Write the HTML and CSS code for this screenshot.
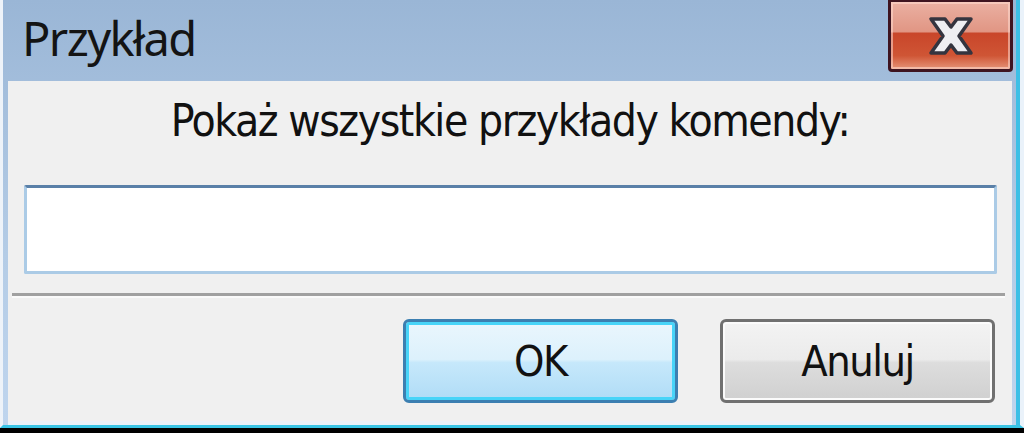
FILE: index.html
```html
<!DOCTYPE html>
<html lang="pl">
<head>
<meta charset="utf-8">
<title>Przykład</title>
<link rel="stylesheet" href="styles.css">
</head>
<body>
<div class="window">
  <div class="titlebar">
    <div class="title">Przykład</div>
    <button class="close" aria-label="Zamknij">
      <svg width="48" height="42" viewBox="0 0 48 42">
        <path d="M4 4 L18 4 L24 12 L30 4 L44 4 L32 21 L44 38 L30 38 L24 30 L18 38 L4 38 L16 21 Z" fill="#eeeef2" stroke="#34343f" stroke-width="3.5" stroke-linejoin="round"/>
      </svg>
    </button>
  </div>
  <div class="client">
    <div class="label">Pokaż wszystkie przykłady komendy:</div>
    <div class="input"></div>
    <div class="separator"></div>
    <div class="buttons">
      <button class="btn btn-default">OK</button>
      <button class="btn">Anuluj</button>
    </div>
  </div>
</div>
</body>
</html>
```

FILE: styles.css
```css
html, body {
  margin: 0;
  padding: 0;
  background: #000;
  width: 1024px;
  height: 433px;
  overflow: hidden;
}

.window {
  box-sizing: border-box;
  width: 1024px;
  height: 428px;
  display: flex;
  flex-direction: column;
  background: linear-gradient(to bottom, #9ab6d6 0%, #b4cce6 60%, #bfd5ee 100%);
  border-left: 3px solid #eef3f9;
  border-right: 4px solid #eaf2fa;
  border-bottom: 3px solid #38c4e6;
  padding: 0 0 0 5px;
  box-shadow: inset -4px 0 0 #3cbfe6;
}

.titlebar {
  height: 81px;
  display: flex;
  align-items: flex-start;
  justify-content: space-between;
  flex: none;
}

.title {
  font-family: "Noto Sans", "Open Sans", sans-serif;
  font-size: 47px;
  letter-spacing: -1.6px;
  color: #141414;
  padding: 6px 0 0 14px;
  line-height: 64px;
}

.close {
  box-sizing: border-box;
  width: 125px;
  height: 72px;
  margin-right: 7px;
  padding: 0;
  border: 3px solid #3e1420;
  border-top-width: 2px;
  border-radius: 0 0 4px 4px;
  background: linear-gradient(to bottom, #eab0a2 0%, #e19684 44%, #c9462a 47%, #cf5535 80%, #e69378 100%);
  box-shadow: inset 0 0 0 2px rgba(255, 220, 210, 0.55);
  display: flex;
  align-items: center;
  justify-content: center;
}

.client {
  flex: 1;
  background: #f0f0f0;
  margin-right: 8px;
  display: flex;
  flex-direction: column;
  border-bottom: 4px solid #eaf1f8;
}

.label {
  font-family: "DejaVu Sans Condensed", "DejaVu Sans", sans-serif;
  font-size: 44px;
  letter-spacing: -1.45px;
  line-height: 50px;
  color: #111;
  text-align: center;
  margin-top: 15px;
}

.input {
  box-sizing: border-box;
  height: 89px;
  margin: 39px 15px 0 16px;
  background: #fff;
  border: 3px solid #abcbe6;
  border-top: 3px solid #5a80a8;
  border-radius: 2px;
}

.separator {
  height: 3px;
  margin: 19px 7px 0 4px;
  background: #a0a0a0;
  border-bottom: 2px solid #fafafa;
}

.buttons {
  display: flex;
  justify-content: flex-end;
  gap: 42px;
  margin: 21px 17px 0 0;
}

.btn {
  box-sizing: border-box;
  width: 275px;
  height: 84px;
  padding: 0;
  font-family: "DejaVu Sans Condensed", "DejaVu Sans", sans-serif;
  font-size: 43px;
  letter-spacing: -1.5px;
  color: #111;
  border: 3px solid #707070;
  border-radius: 6px;
  background: linear-gradient(to bottom, #f3f3f3 0%, #ebebeb 48%, #dddddd 52%, #d0d0d0 100%);
  box-shadow: inset 0 0 0 2px #fbfbfb;
}

.btn-default {
  border-color: #3c7fb1;
  background: linear-gradient(to bottom, #eaf6fd 0%, #dcf1fc 48%, #c6e8fb 52%, #b0dcf6 100%);
  box-shadow: inset 0 0 0 3px #48d4f8;
}
```
